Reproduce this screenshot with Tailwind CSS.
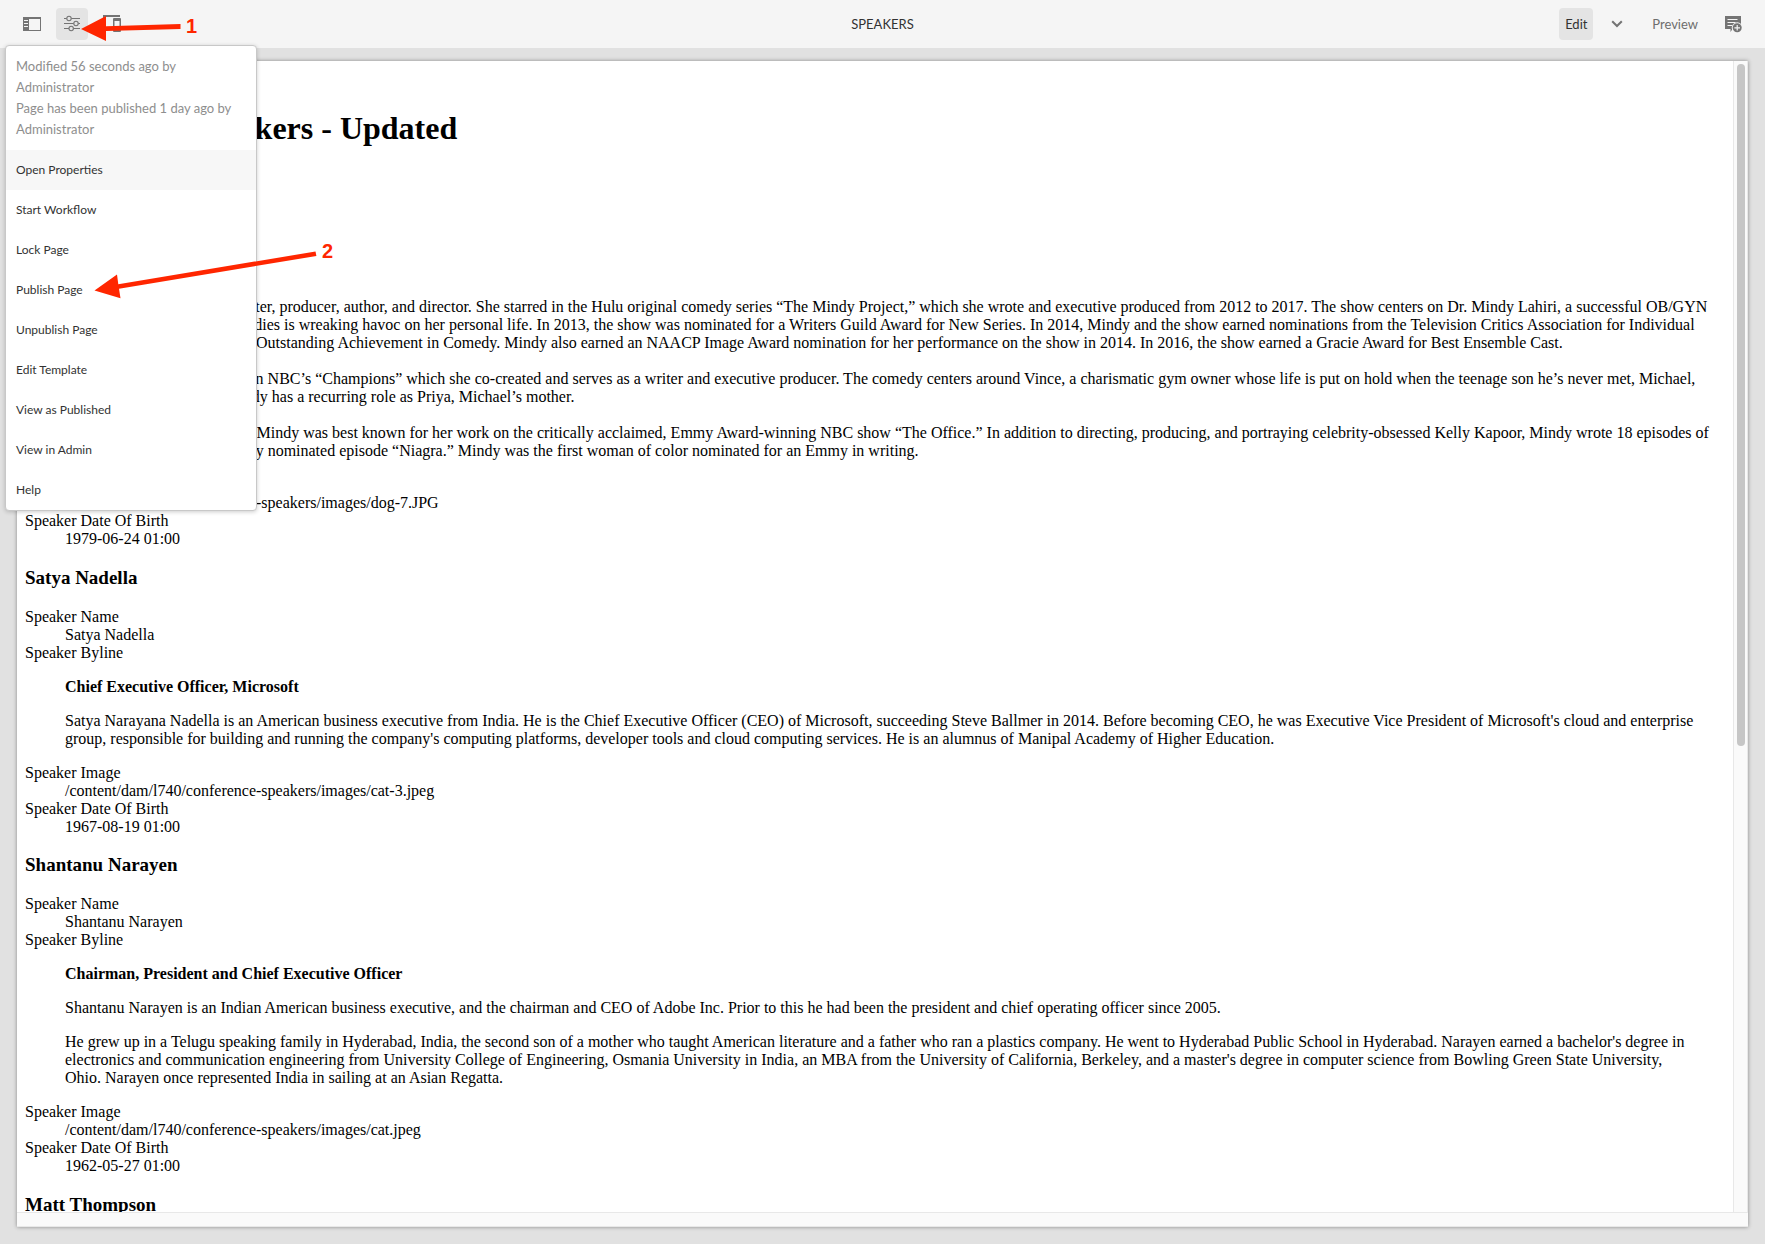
<!DOCTYPE html>
<html lang="en">
<head>
<meta charset="utf-8">
<title>Speakers</title>
<script src="https://cdn.jsdelivr.net/npm/@tailwindcss/browser@4"></script>
</head>
<body class="relative flex h-screen flex-col overflow-hidden bg-[#e1e1e1] font-[Lato,sans-serif] text-[#323232]">

<header class="grid h-12 shrink-0 grid-cols-[1fr_auto_1fr] items-center bg-[#f5f5f5] px-4 text-[13px] leading-5">
  <div class="flex gap-2">
    <button type="button" aria-label="Toggle side panel" class="flex size-8 items-center justify-center rounded">
      <svg width="18" height="18" viewBox="0 0 18 18" fill="#747474"><path fill-rule="evenodd" d="M0 2h18v14H0zM6 4v11h11V4z"/><path d="M1 5h4v1H1zM1 8h4v1H1zM1 11h4v1H1z" fill="#f5f5f5"/></svg>
    </button>
    <button type="button" aria-label="Page information" aria-expanded="true" class="flex size-8 items-center justify-center rounded bg-[#e4e4e4]">
      <svg width="18" height="18" viewBox="0 0 18 18" fill="none" stroke="#747474" stroke-width="1.1"><path d="M1 3.5h2.7M8.300 3.500H17M1 8.500h9.700M15.300 8.500H17M1 13.500h5M10.500 13.500H17"/><circle cx="6" cy="3.500" r="2.200"/><circle cx="13" cy="8.500" r="2.200"/><circle cx="8.200" cy="13.500" r="2.200"/></svg>
    </button>
    <button type="button" aria-label="Emulator" class="flex size-8 items-center justify-center rounded">
      <svg width="18" height="18" viewBox="0 0 18 18" fill="#747474"><path d="M0 0h17v2H2v10h7v1H0z"/><path fill-rule="evenodd" d="M11 3h6a1 1 0 0 1 1 1v12a1 1 0 0 1-1 1h-6a1 1 0 0 1-1-1V4a1 1 0 0 1 1-1zm.5 3v8h5V6z"/></svg>
    </button>
  </div>
  <h1 class="text-[13px] text-[#323232]">SPEAKERS</h1>
  <div class="flex items-center justify-end gap-2">
    <button type="button" class="h-8 w-[34px] rounded bg-[#e4e4e4]">Edit</button>
    <button type="button" aria-label="Choose mode" class="flex size-8 items-center justify-center">
      <svg width="12" height="8" viewBox="0 0 12 8" fill="none" stroke="#747474" stroke-width="2"><path d="M1.200 1.200L6 6l4.800-4.800"/></svg>
    </button>
    <button type="button" class="h-8 px-[11px] text-[#6e6e6e]">Preview</button>
    <button type="button" aria-label="Add annotation" class="flex size-8 items-center justify-center">
      <svg width="18" height="18" viewBox="0 0 18 18"><path d="M1 1h16v13H8.500L6.500 17v-3H1z" fill="#747474"/><path d="M3.500 4.500h10M3.500 7.500h8M3.500 10.500h4.500" stroke="#f5f5f5"/><circle cx="13.200" cy="12.800" r="5.500" fill="#f5f5f5"/><circle cx="13.200" cy="12.800" r="4.500" fill="#747474"/><path d="M13.200 10v5.600M10.400 12.800H16" stroke="#f5f5f5" stroke-width="1.200"/></svg>
    </button>
  </div>
</header>

<main class="mx-[17px] mt-[13px] mb-[17px] grid min-h-0 flex-1 grid-cols-[minmax(0,1fr)_15px] grid-rows-[minmax(0,1fr)_15px] bg-[#fafafa] shadow-[0_0_4px_rgba(0,0,0,0.4)]">
  <article class="overflow-hidden bg-white px-2 pt-[49px] font-['Liberation_Serif',serif] text-[16px] leading-[18px] text-black">
    <h2 class="text-[32px] leading-9 font-bold">Conference Speakers - Updated</h2>

    <h3 class="mt-[23px] mb-[19px] text-[19px] leading-[22px] font-bold">Mindy Kaling</h3>
    <dl>
      <dt>Speaker Name</dt>
      <dd class="ml-10">Mindy Kaling</dd>
      <dt>Speaker Byline</dt>
      <dd class="my-4 ml-10">
        <p><b>Actress, Writer, Producer</b><br>
        Mindy Kaling, an actress, writer, producer, author, and director. She starred in the Hulu original comedy series “The Mindy Project,” which she wrote and executive produced from 2012 to 2017. The show centers on Dr. Mindy Lahiri, a successful OB/GYN whose love of romantic comedies is wreaking havoc on her personal life. In 2013, the show was nominated for a Writers Guild Award for New Series. In 2014, Mindy and the show earned nominations from the Television Critics Association for Individual Achievement in Comedy and Outstanding Achievement in Comedy. Mindy also earned an NAACP Image Award nomination for her performance on the show in 2014. In 2016, the show earned a Gracie Award for Best Ensemble Cast.<br><br>
        Mindy can currently be seen in NBC’s “Champions” which she co-created and serves as a writer and executive producer. The comedy centers around Vince, a charismatic gym owner whose life is put on hold when the teenage son he’s never met, Michael, is&nbsp;dropped off in his lap. Mindy has a recurring role as Priya, Michael’s mother.<br><br>
        Prior to “The Mindy Project” Mindy was best known for her work on the critically acclaimed, Emmy Award-winning NBC show “The Office.” In addition to directing, producing, and portraying celebrity-obsessed Kelly Kapoor, Mindy wrote 18 episodes of the series, including the Emmy nominated episode “Niagra.” Mindy was the first woman of color nominated for an Emmy in writing.</p>
      </dd>
      <dt>Speaker Image</dt>
      <dd class="ml-10">/content/dam/l740/conference-speakers/images/dog-7.JPG</dd>
      <dt>Speaker Date Of Birth</dt>
      <dd class="ml-10">1979-06-24 01:00</dd>
    </dl>

    <h3 class="my-[19px] text-[19px] leading-[22px] font-bold">Satya Nadella</h3>
    <dl>
      <dt>Speaker Name</dt>
      <dd class="ml-10">Satya Nadella</dd>
      <dt>Speaker Byline</dt>
      <dd class="my-4 ml-10 flex flex-col gap-4">
        <p><b>Chief Executive Officer, Microsoft</b></p>
        <p>Satya Narayana Nadella is an American business executive from India. He is the Chief Executive Officer (CEO) of Microsoft, succeeding Steve Ballmer in 2014. Before becoming CEO, he was Executive Vice President of Microsoft's cloud and enterprise group, responsible for building and running the company's computing platforms, developer tools and cloud computing services. He is an alumnus of Manipal Academy of Higher Education.</p>
      </dd>
      <dt>Speaker Image</dt>
      <dd class="ml-10">/content/dam/l740/conference-speakers/images/cat-3.jpeg</dd>
      <dt>Speaker Date Of Birth</dt>
      <dd class="ml-10">1967-08-19 01:00</dd>
    </dl>

    <h3 class="mt-[18px] mb-[19px] text-[19px] leading-[22px] font-bold">Shantanu Narayen</h3>
    <dl>
      <dt>Speaker Name</dt>
      <dd class="ml-10">Shantanu Narayen</dd>
      <dt>Speaker Byline</dt>
      <dd class="my-4 ml-10 flex flex-col gap-4">
        <p><b>Chairman, President and Chief Executive Officer</b></p>
        <p>Shantanu Narayen is an Indian American business executive, and the chairman and CEO of Adobe Inc. Prior to this he had been the president and chief operating officer since 2005.</p>
        <p>He grew up in a Telugu speaking family in Hyderabad, India, the second son of a mother who taught American literature and a father who ran a plastics company. He went to Hyderabad Public School in Hyderabad. Narayen earned a bachelor's degree in electronics and communication engineering from University College of Engineering, Osmania University in India, an MBA from the University of California, Berkeley, and a master's degree in computer science from Bowling Green State University, Ohio.&nbsp;Narayen once represented India in sailing at an Asian Regatta.</p>
      </dd>
      <dt>Speaker Image</dt>
      <dd class="ml-10">/content/dam/l740/conference-speakers/images/cat.jpeg</dd>
      <dt>Speaker Date Of Birth</dt>
      <dd class="ml-10">1962-05-27 01:00</dd>
    </dl>

    <h3 class="my-[19px] text-[19px] leading-[22px] font-bold">Matt Thompson</h3>
  </article>
  <div class="border-x border-[#e8e8e8] px-[3px] pt-[3px]">
    <div class="h-[59.4%] w-2 rounded-full bg-[#c6c6c6]"></div>
  </div>
  <div class="col-span-2 border-y border-[#e8e8e8]"></div>
</main>

<!-- Page information popover -->
<nav aria-label="Page information" class="absolute top-[45px] left-[5px] w-[252px] rounded border border-[#c8c8c8] bg-white shadow-[0_1px_4px_rgba(0,0,0,0.2)]">
  <div class="px-[10px] py-[10px] text-[13px] leading-[21px] text-[#8e8e8e]">
    <p>Modified 56 seconds ago by<br>Administrator</p>
    <p>Page has been published 1 day ago by<br>Administrator</p>
  </div>
  <ul class="text-[12px] leading-10">
    <li><a href="#" class="block bg-[#f7f7f7] px-[10px]">Open Properties</a></li>
    <li><a href="#" class="block px-[10px]">Start Workflow</a></li>
    <li><a href="#" class="block px-[10px]">Lock Page</a></li>
    <li><a href="#" class="block px-[10px]">Publish Page</a></li>
    <li><a href="#" class="block px-[10px]">Unpublish Page</a></li>
    <li><a href="#" class="block px-[10px]">Edit Template</a></li>
    <li><a href="#" class="block px-[10px]">View as Published</a></li>
    <li><a href="#" class="block px-[10px]">View in Admin</a></li>
    <li><a href="#" class="block px-[10px]">Help</a></li>
  </ul>
</nav>

<!-- Step callouts -->
<svg class="pointer-events-none absolute top-0 left-0 font-['Liberation_Sans',sans-serif] text-[20px] font-bold" width="350" height="310" viewBox="0 0 350 310" fill="#ff2600">
  <path d="M81 29L106 16v10.300L180.500 24v5L106 31v10z"/>
  <text x="186" y="33">1</text>
  <path d="M94.500 290.500L117 274.500l1.300 9.700L315.500 251.500l.900 4.500L119 288.700l1.500 9.500z"/>
  <text x="322" y="258">2</text>
</svg>
</body>
</html>
